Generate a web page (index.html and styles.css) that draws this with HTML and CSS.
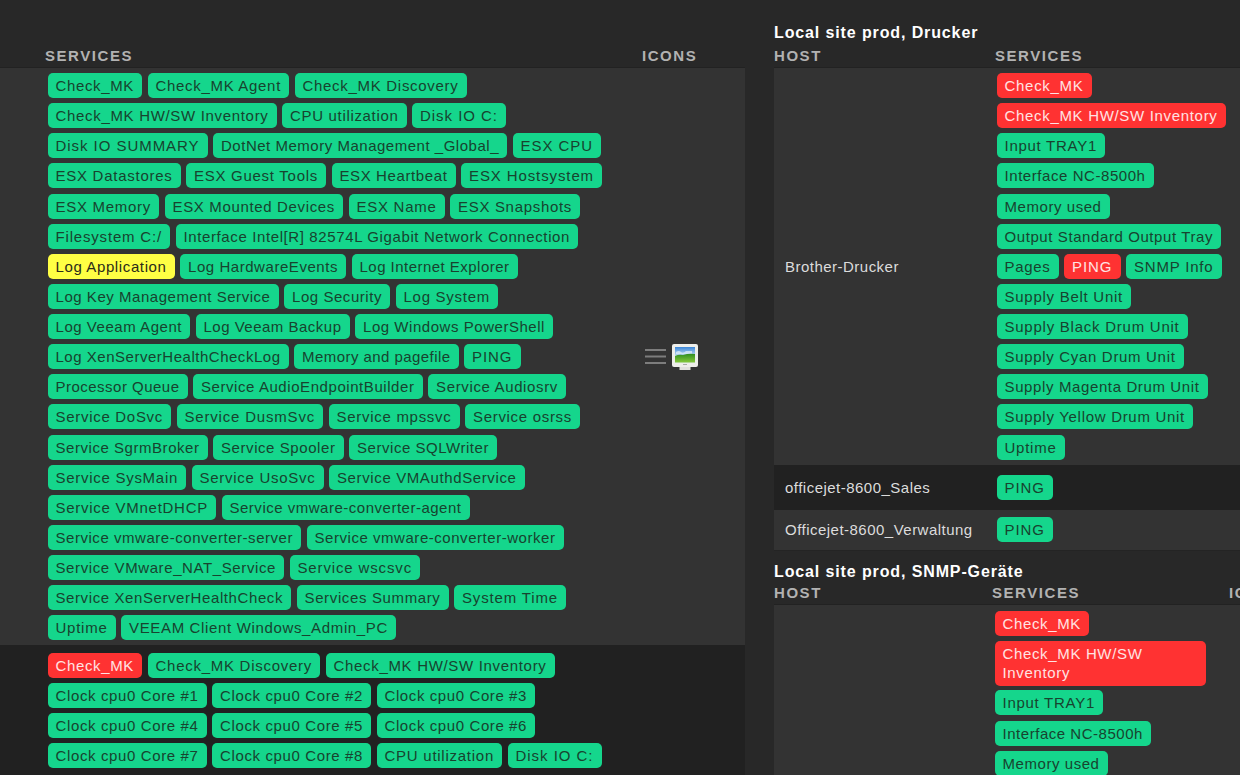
FILE: index.html
```html
<!DOCTYPE html>
<html lang="en">
<head>
<meta charset="utf-8">
<title>Local site prod</title>
<link rel="stylesheet" href="styles.css">
</head>
<body>
<main class="board">
<section class="panel left">
  <div class="group-title"></div>
  <div class="head"><span class="h-services">SERVICES</span><span class="h-icons">ICONS</span></div>
  <div class="row odd first">
    <div class="services" data-list="windows"></div>
    <div class="icons">
      <svg class="menu" viewBox="0 0 21 17"><path d="M0 2h21M0 8.500h21M0 15h21" stroke="#7d7d7d" stroke-width="2"/></svg>
      <svg class="monitor" viewBox="0 0 28 28">
        <defs>
          <linearGradient id="sky" x1="0" y1="0" x2="0" y2="1"><stop offset="0" stop-color="#3b86d8"/><stop offset=".6" stop-color="#c9e2f4"/></linearGradient>
          <linearGradient id="grass" x1="0" y1="0" x2="0" y2="1"><stop offset="0" stop-color="#2f8d22"/><stop offset="1" stop-color="#86c93a"/></linearGradient>
        </defs>
        <path d="M8.500 23h11v4h-11z" fill="#e0e0dc"/>
        <rect x="1" y="1" width="26" height="23" rx="2" fill="#eeeeea"/>
        <rect x="4" y="4" width="20" height="15.500" fill="url(#sky)"/>
        <path d="M5 9q3-2 5 0t5-1l6 0v3H5z" fill="#e6f1fb" opacity=".7"/>
        <path d="M4 13q4-2 8-1 6-2 12-1v8.500H4z" fill="url(#grass)"/>
        <path d="M12 21.500h4" stroke="#aaa"/>
      </svg>
    </div>
  </div>
  <div class="row even">
    <div class="services" data-list="clocks"></div>
  </div>
</section>
<section class="panel right">
  <div class="group-title">Local site prod, Drucker</div>
  <div class="head"><span class="h-host">HOST</span><span>SERVICES</span></div>
  <div class="row odd first">
    <div class="host">Brother-Drucker</div>
    <div class="services" data-list="brother"></div>
  </div>
  <div class="row even short"><div class="host">officejet-8600_Sales</div><div class="services" data-list="ping"></div></div>
  <div class="row odd last"><div class="host">Officejet-8600_Verwaltung</div><div class="services" data-list="ping"></div></div>
  <div class="group-title second">Local site prod, SNMP-Geräte</div>
  <div class="head"><span class="h-host narrow">HOST</span><span class="h-wide">SERVICES</span><span>ICONS</span></div>
  <div class="row odd first snmp">
    <div class="host"></div>
    <div class="services" data-list="snmp"></div>
  </div>
</section>
</main>
<script src="services.js"></script>
</body>
</html>
```

FILE: services.js
```javascript
// One array per line; each service is [label, chip width, state].
const lists = {
  windows: [
    [["Check_MK", 94.5], ["Check_MK Agent", 141.5], ["Check_MK Discovery", 172]],
    [["Check_MK HW/SW Inventory", 229], ["CPU utilization", 124.5], ["Disk IO C:", 94]],
    [["Disk IO SUMMARY", 160], ["DotNet Memory Management _Global_", 294], ["ESX CPU", 88.5]],
    [["ESX Datastores", 133], ["ESX Guest Tools", 140], ["ESX Heartbeat", 124], ["ESX Hostsystem", 141]],
    [["ESX Memory", 111.5], ["ESX Mounted Devices", 178.5], ["ESX Name", 96], ["ESX Snapshots", 130]],
    [["Filesystem C:/", 122.5], ["Interface Intel[R] 82574L Gigabit Network Connection", 402.5]],
    [["Log Application", 127, "warn"], ["Log HardwareEvents", 166], ["Log Internet Explorer", 166]],
    [["Log Key Management Service", 231], ["Log Security", 106], ["Log System", 102.5]],
    [["Log Veeam Agent", 142.5], ["Log Veeam Backup", 154], ["Log Windows PowerShell", 198]],
    [["Log XenServerHealthCheckLog", 241], ["Memory and pagefile", 164.5], ["PING", 56.5]],
    [["Processor Queue", 140], ["Service AudioEndpointBuilder", 229.5], ["Service Audiosrv", 138]],
    [["Service DoSvc", 123.5], ["Service DusmSvc", 146.5], ["Service mpssvc", 131], ["Service osrss", 115]],
    [["Service SgrmBroker", 160], ["Service Spooler", 130.5], ["Service SQLWriter", 148]],
    [["Service SysMain", 138.5], ["Service UsoSvc", 132], ["Service VMAuthdService", 195.5]],
    [["Service VMnetDHCP", 168.5], ["Service vmware-converter-agent", 248]],
    [["Service vmware-converter-server", 253.5], ["Service vmware-converter-worker", 257]],
    [["Service VMware_NAT_Service", 236.5], ["Service wscsvc", 130.5]],
    [["Service XenServerHealthCheck", 243.5], ["Services Summary", 152], ["System Time", 112]],
    [["Uptime", 68], ["VEEAM Client Windows_Admin_PC", 275]]
  ],
  clocks: [
    [["Check_MK", 94.5, "crit"], ["Check_MK Discovery", 172.5], ["Check_MK HW/SW Inventory", 229]],
    [["Clock cpu0 Core #1", 159], ["Clock cpu0 Core #2", 159], ["Clock cpu0 Core #3", 158.5]],
    [["Clock cpu0 Core #4", 159], ["Clock cpu0 Core #5", 159], ["Clock cpu0 Core #6", 158.5]],
    [["Clock cpu0 Core #7", 159], ["Clock cpu0 Core #8", 159], ["CPU utilization", 125.5], ["Disk IO C:", 94]]
  ],
  brother: [
    [["Check_MK", 95, "crit"]],
    [["Check_MK HW/SW Inventory", 229, "crit"]],
    [["Input TRAY1", 108.5]],
    [["Interface NC-8500h", 157]],
    [["Memory used", 113]],
    [["Output Standard Output Tray", 224.5]],
    [["Pages", 62], ["PING", 56.5, "crit"], ["SNMP Info", 95.5]],
    [["Supply Belt Unit", 134.5]],
    [["Supply Black Drum Unit", 191]],
    [["Supply Cyan Drum Unit", 187]],
    [["Supply Magenta Drum Unit", 211]],
    [["Supply Yellow Drum Unit", 196.5]],
    [["Uptime", 68]]
  ],
  ping: [[["PING", 56.5]]],
  snmp: [
    [["Check_MK", 94.5, "crit"]],
    [["Check_MK HW/SW Inventory", 211, "crit wrap"]],
    [["Input TRAY1", 108.5]],
    [["Interface NC-8500h", 156.5]],
    [["Memory used", 113]]
  ]
};

for (const box of document.querySelectorAll("[data-list]")) {
  for (const services of lists[box.dataset.list]) {
    const line = box.appendChild(document.createElement("div"));
    line.className = "line";
    for (const [label, width, state = ""] of services) {
      const chip = line.appendChild(document.createElement("span"));
      chip.className = "chip " + state;
      chip.textContent = label;
      if (state.includes("wrap")) {
        line.classList.add("double");
        continue;
      }
      // Tracking spreads the label over the chip's inner width.
      const natural = chip.getBoundingClientRect().width;
      chip.style.letterSpacing = (width - natural) / label.length + "px";
      chip.style.width = width + "px";
    }
  }
}
```

FILE: styles.css
```css
* { box-sizing: border-box; }
body {
  margin: 0;
  background: #282828;
  font: 15px/19px "Liberation Sans", Arial, sans-serif;
  letter-spacing: 0;
  color: #dcdcdc;
}
.board { display: flex; gap: 29px; width: 1240px; height: 775px; overflow: hidden; }
.panel { flex: none; white-space: nowrap; }
.left { width: 745px; }
.right { width: 520px; }
.group-title { height: 45px; padding-top: 23px; font-size: 16px; line-height: 20px; font-weight: bold; letter-spacing: 0.88px; color: #fff; }
.group-title.second { height: 31px; padding-top: 11px; }
.head { display: flex; height: 22px; padding-top: 1px; font-weight: bold; letter-spacing: 1.55px; color: #b2b2b2; }
.h-services { width: 597px; margin-left: 45px; }
.h-host { width: 221px; }
.h-host.narrow { width: 218px; }
.h-wide { width: 237px; }
.row { display: flex; align-items: center; padding: 8px 0 6px; }
.row.first { align-items: flex-start; padding: 5px 0; border-top: 1px solid #222; }
.row.snmp { padding-top: 6px; }
.odd { background: #333; }
.even { background: #212121; }
.left .services { width: 597.5px; padding-left: 47.5px; }
.left .row.first { height: 578px; }
.left .row.even { height: 140px; align-items: flex-start; }
.right .row.first { height: 398px; }
.right .row.first .host, .icons { align-self: center; }
.right .row.short { height: 45px; padding: 0; }
.right .row.last { height: 41px; padding: 0 0 1px; border-bottom: 1px solid #242424; }
.host { width: 222.5px; padding-left: 11px; letter-spacing: 0.48px; }
.snmp .host { width: 220.5px; }
.line { display: flex; gap: 5.5px; height: 30.13px; }
.line.double { height: 49.3px; }
.short .line, .last .line { height: 25px; }
.chip {
  flex: none;
  height: 25px;
  padding: 3px 8px;
  border-radius: 5px;
  background: #15d68c;
  color: #18432f;
}
.chip.crit { background: #ff3232; color: #ffe3e3; }
.chip.warn { background: #ffff44; color: #2b2b18; }
.chip.wrap { width: 211px; height: 45px; white-space: normal; letter-spacing: 0.65px; }
.icons { display: flex; align-items: center; gap: 5px; margin-left: 47.5px; }
.menu { width: 21px; height: 17px; }
.monitor { width: 28px; height: 28px; }
```
